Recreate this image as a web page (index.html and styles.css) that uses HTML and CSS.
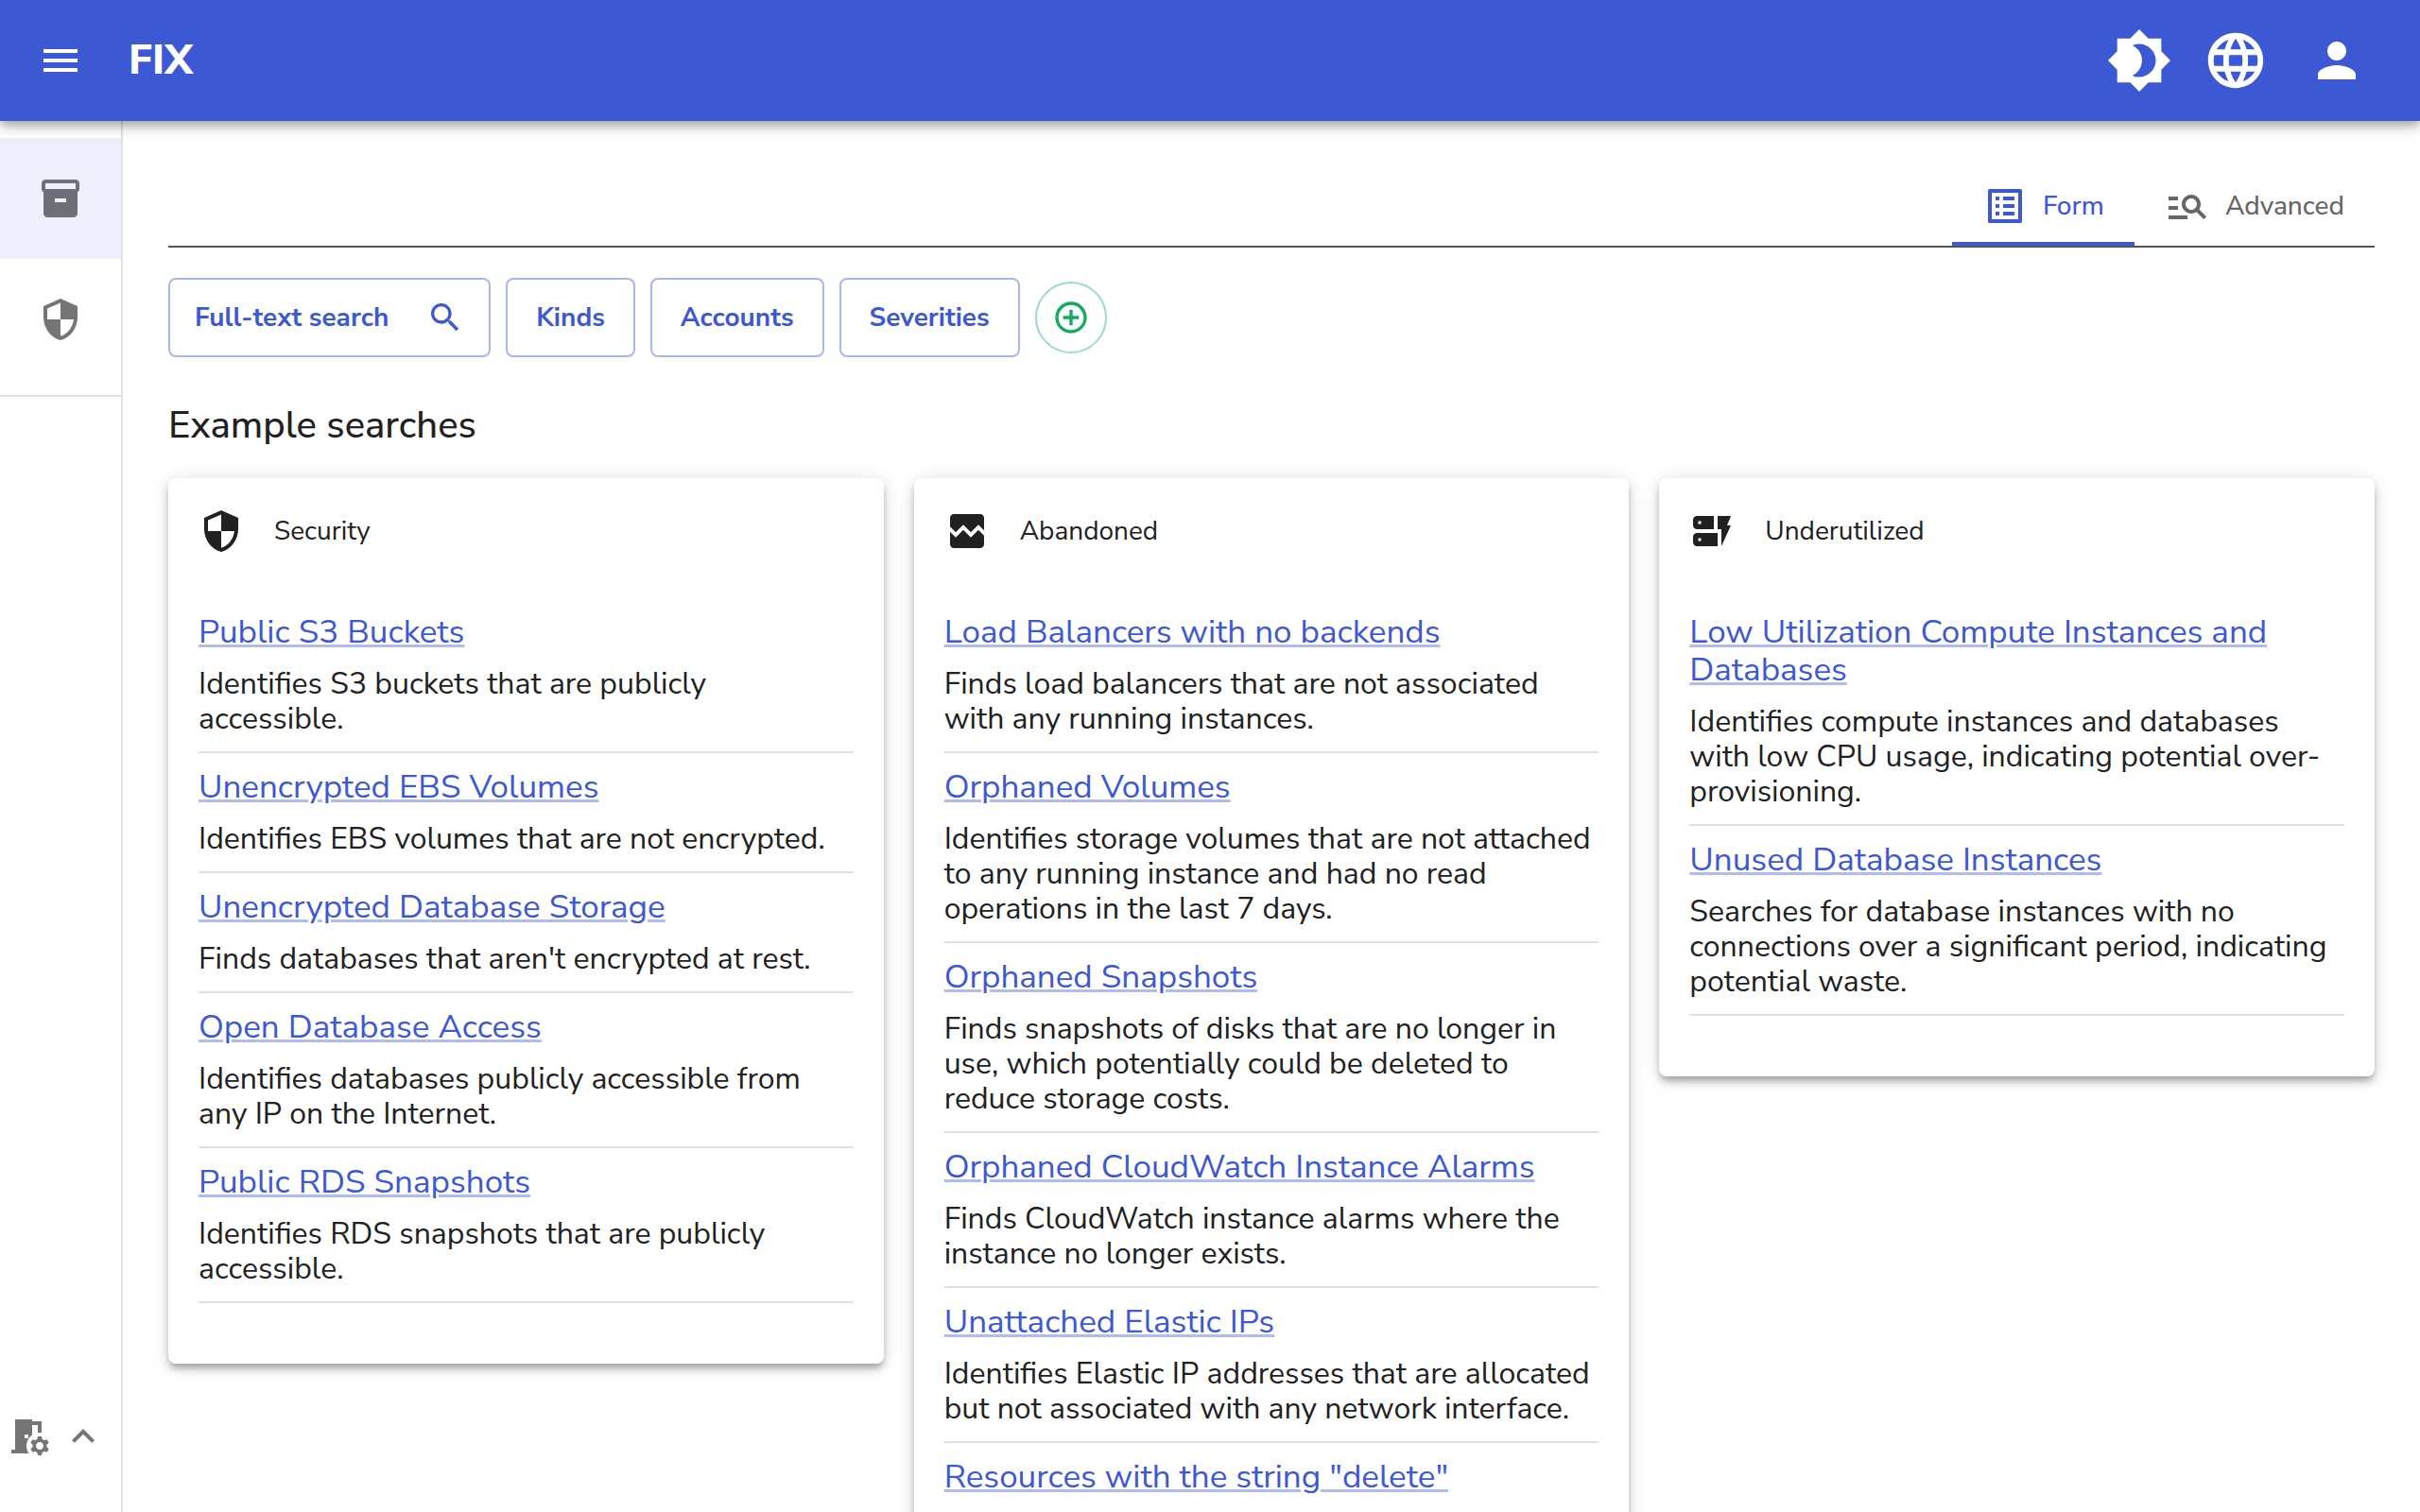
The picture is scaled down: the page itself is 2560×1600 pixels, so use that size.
FILE: index.html
```html
<!DOCTYPE html>
<html lang="en">
<head>
<meta charset="utf-8">
<meta name="viewport" content="width=device-width, initial-scale=1">
<title>FIX</title>
<link rel="stylesheet" href="styles.css">
</head>
<body>
<header class="appbar">
  <button class="icon-btn menu-btn" type="button" aria-label="Menu"><svg class="icon" viewBox="0 0 24 24"><path d="M3 18h18v-2H3v2zm0-5h18v-2H3v2zm0-7v2h18V6H3z"/></svg></button>
  <a class="brand" href="#">FIX</a>
  <div class="actions">
    <button class="icon-btn" type="button" aria-label="Theme"><svg class="icon icon-xl" viewBox="0 0 24 24"><path d="M20 8.69V4h-4.69L12 .69 8.69 4H4v4.69L.69 12 4 15.31V20h4.69L12 23.31 15.31 20H20v-4.69L23.31 12 20 8.69zM12 18c-.89 0-1.74-.2-2.5-.55C11.56 16.5 13 14.42 13 12s-1.44-4.5-3.5-5.45C10.26 6.2 11.11 6 12 6c3.31 0 6 2.69 6 6s-2.69 6-6 6z"/></svg></button>
    <button class="icon-btn" type="button" aria-label="Language"><svg class="icon icon-xl" viewBox="0 0 24 24"><path d="M11.99 2C6.47 2 2 6.48 2 12s4.47 10 9.99 10C17.52 22 22 17.52 22 12S17.52 2 11.99 2zm6.93 6h-2.95c-.32-1.25-.78-2.45-1.38-3.56 1.84.63 3.37 1.91 4.33 3.56zM12 4.04c.83 1.2 1.48 2.53 1.91 3.96h-3.82c.43-1.43 1.08-2.76 1.91-3.96zM4.26 14C4.1 13.36 4 12.69 4 12s.1-1.36.26-2h3.38c-.08.66-.14 1.32-.14 2 0 .68.06 1.34.14 2H4.26zm.82 2h2.95c.32 1.25.78 2.45 1.38 3.56-1.84-.63-3.37-1.9-4.33-3.56zm2.95-8H5.08c.96-1.66 2.49-2.93 4.33-3.56C8.81 5.55 8.35 6.75 8.03 8zM12 19.96c-.83-1.2-1.48-2.53-1.91-3.96h3.82c-.43 1.43-1.08 2.76-1.91 3.96zM14.34 14H9.66c-.09-.66-.16-1.32-.16-2 0-.68.07-1.35.16-2h4.68c.09.65.16 1.32.16 2 0 .68-.07 1.34-.16 2zm.25 5.56c.6-1.11 1.06-2.31 1.38-3.56h2.95c-.96 1.65-2.49 2.93-4.33 3.56zM16.36 14c.08-.66.14-1.32.14-2 0-.68-.06-1.34-.14-2h3.38c.16.64.26 1.31.26 2s-.1 1.36-.26 2h-3.38z"/></svg></button>
    <button class="icon-btn" type="button" aria-label="Account"><svg class="icon icon-lg" viewBox="0 0 24 24"><path d="M12 12c2.21 0 4-1.79 4-4s-1.79-4-4-4-4 1.79-4 4 1.79 4 4 4zm0 2c-2.67 0-8 1.34-8 4v2h16v-2c0-2.66-5.33-4-8-4z"/></svg></button>
  </div>
</header>
<div class="shell">
  <nav class="sidebar">
    <div class="nav-list">
      <a class="nav-item active" href="#" aria-label="Inventory"><svg class="icon" viewBox="0 0 24 24"><path d="M20 2H4c-1 0-2 .9-2 2v3.01c0 .72.43 1.34 1 1.69V20c0 1.1 1.1 2 2 2h14c.9 0 2-.9 2-2V8.7c.57-.35 1-.97 1-1.69V4c0-1.1-1-2-2-2zm-5 12H9v-2h6v2zm5-7H4V4l16-.02V7z"/></svg></a>
      <a class="nav-item" href="#" aria-label="Security"><svg class="icon" viewBox="0 0 24 24"><path d="M12 1 3 5v6c0 5.55 3.84 10.74 9 12 5.16-1.26 9-6.45 9-12V5l-9-4zm0 10.99h7c-.53 4.12-3.28 7.79-7 8.94V12H5V6.3l7-3.11v8.8z"/></svg></a>
    </div>
    <button class="workspace" type="button" aria-label="Workspace settings">
      <svg class="icon" viewBox="0 0 24 24"><path d="M14 11.26V6h3v4h2V4h-5V3H5v16H3v2h9.26C11.47 19.87 11 18.49 11 17c0-2.38 1.19-4.47 3-5.74zM10 11h2v2h-2v-2zm11.69 5.37 1.14-1-1-1.73-1.45.49c-.32-.27-.68-.48-1.08-.63L19 12h-2l-.3 1.49c-.4.15-.76.36-1.08.63l-1.45-.49-1 1.73 1.14 1c-.08.5-.08.76 0 1.26l-1.14 1 1 1.73 1.45-.49c.32.27.68.48 1.08.63L17 22h2l.3-1.49c.4-.15.76-.36 1.08-.63l1.45.49 1-1.73-1.14-1c.08-.51.08-.77 0-1.27zM18 19c-1.1 0-2-.9-2-2s.9-2 2-2 2 .9 2 2-.9 2-2 2z"/></svg>
      <svg class="icon" viewBox="0 0 24 24"><path d="m12 8-6 6 1.41 1.41L12 10.83l4.59 4.58L18 14z"/></svg>
    </button>
  </nav>
  <main class="content">
    <div class="tabs" role="tablist">
      <button class="tab selected" type="button" role="tab" aria-selected="true"><svg class="icon" viewBox="0 0 24 24"><path d="M19 5v14H5V5h14m1.1-2H3.9c-.5 0-.9.4-.9.9v16.2c0 .4.4.9.9.9h16.2c.4 0 .9-.5.9-.9V3.9c0-.5-.5-.9-.9-.9zM11 7h6v2h-6V7zm0 4h6v2h-6v-2zm0 4h6v2h-6zM7 7h2v2H7zm0 4h2v2H7zm0 4h2v2H7z"/></svg>Form</button>
      <button class="tab" type="button" role="tab" aria-selected="false"><svg class="icon" viewBox="0 0 24 24"><path d="M7 9H2V7h5v2zm0 3H2v2h5v-2zm13.59 7-3.83-3.83c-.8.52-1.74.83-2.76.83-2.76 0-5-2.24-5-5s2.24-5 5-5 5 2.24 5 5c0 1.02-.31 1.96-.83 2.75L22 17.59 20.59 19zM17 11c0-1.65-1.35-3-3-3s-3 1.35-3 3 1.35 3 3 3 3-1.35 3-3zM2 19h10v-2H2v2z"/></svg>Advanced</button>
    </div>
    <div class="filters">
      <button class="filter full-text" type="button">Full-text search<svg class="icon icon-sm" viewBox="0 0 24 24"><path d="M15.5 14h-.79l-.28-.27C15.41 12.59 16 11.11 16 9.5 16 5.91 13.09 3 9.5 3S3 5.91 3 9.5 5.91 16 9.5 16c1.61 0 3.09-.59 4.23-1.57l.27.28v.79l5 4.99L20.49 19l-4.99-5zm-6 0C7.01 14 5 11.99 5 9.5S7.01 5 9.5 5 14 7.01 14 9.5 11.99 14 9.5 14z"/></svg></button>
      <button class="filter" type="button">Kinds</button>
      <button class="filter" type="button">Accounts</button>
      <button class="filter" type="button">Severities</button>
      <button class="add-filter" type="button" aria-label="Add filter"><svg class="icon icon-sm" viewBox="0 0 24 24"><path d="M13 7h-2v4H7v2h4v4h2v-4h4v-2h-4V7zm-1-5C6.48 2 2 6.48 2 12s4.48 10 10 10 10-4.48 10-10S17.52 2 12 2zm0 18c-4.41 0-8-3.59-8-8s3.59-8 8-8 8 3.59 8 8-3.59 8-8 8z"/></svg></button>
    </div>
    <h1 class="title">Example searches</h1>
    <div class="cards">
      <section class="card">
        <h2 class="card-head"><svg class="icon" viewBox="0 0 24 24"><path d="M12 1 3 5v6c0 5.55 3.84 10.74 9 12 5.16-1.26 9-6.45 9-12V5l-9-4zm0 10.99h7c-.53 4.12-3.28 7.79-7 8.94V12H5V6.3l7-3.11v8.8z"/></svg>Security</h2>
        <ul class="searches">
          <li class="search"><a class="link" href="#">Public S3 Buckets</a><p class="desc">Identifies S3 buckets that are publicly accessible.</p></li>
          <li class="search"><a class="link" href="#">Unencrypted EBS Volumes</a><p class="desc">Identifies EBS volumes that are not encrypted.</p></li>
          <li class="search"><a class="link" href="#">Unencrypted Database Storage</a><p class="desc">Finds databases that aren't encrypted at rest.</p></li>
          <li class="search"><a class="link" href="#">Open Database Access</a><p class="desc">Identifies databases publicly accessible from any IP on the Internet.</p></li>
          <li class="search"><a class="link" href="#">Public RDS Snapshots</a><p class="desc">Identifies RDS snapshots that are publicly accessible.</p></li>
        </ul>
      </section>
      <section class="card">
        <h2 class="card-head"><svg class="icon" viewBox="0 0 24 24"><path d="M21 5v6.59l-3-3.01-4 4.01-4-4-4 4-3-3.01V5c0-1.1.9-2 2-2h14c1.1 0 2 .9 2 2zm-3 6.42 3 3.01V19c0 1.1-.9 2-2 2H5c-1.1 0-2-.9-2-2v-6.58l3 2.99 4-4 4 4 4-3.99z"/></svg>Abandoned</h2>
        <ul class="searches">
          <li class="search"><a class="link" href="#">Load Balancers with no backends</a><p class="desc">Finds load balancers that are not associated with any running instances.</p></li>
          <li class="search"><a class="link" href="#">Orphaned Volumes</a><p class="desc">Identifies storage volumes that are not attached to any running instance and had no read operations in the last 7 days.</p></li>
          <li class="search"><a class="link" href="#">Orphaned Snapshots</a><p class="desc">Finds snapshots of disks that are no longer in use, which potentially could be deleted to reduce storage costs.</p></li>
          <li class="search"><a class="link" href="#">Orphaned CloudWatch Instance Alarms</a><p class="desc">Finds CloudWatch instance alarms where the instance no longer exists.</p></li>
          <li class="search"><a class="link" href="#">Unattached Elastic IPs</a><p class="desc">Identifies Elastic IP addresses that are allocated but not associated with any network interface.</p></li>
          <li class="search"><a class="link" href="#">Resources with the string "delete"</a><p class="desc"></p></li>
        </ul>
      </section>
      <section class="card">
        <h2 class="card-head"><svg class="icon" viewBox="0 0 24 24"><path d="M17 20v-9h-2V4h7l-2 5h2l-5 11zm-2-7v7H4c-1.1 0-2-.9-2-2v-3c0-1.1.9-2 2-2h11zm-8.75 2.75h-1.5v1.5h1.5v-1.5zM13 4v7H4c-1.1 0-2-.9-2-2V6c0-1.1.9-2 2-2h9zM6.25 6.75h-1.5v1.5h1.5v-1.5z"/></svg>Underutilized</h2>
        <ul class="searches">
          <li class="search"><a class="link" href="#">Low Utilization Compute Instances and Databases</a><p class="desc">Identifies compute instances and databases with low CPU usage, indicating potential over-provisioning.</p></li>
          <li class="search"><a class="link" href="#">Unused Database Instances</a><p class="desc">Searches for database instances with no connections over a significant period, indicating potential waste.</p></li>
        </ul>
      </section>
    </div>
  </main>
</div>
</body>
</html>
```
FILE: styles.css
```css
* { box-sizing: border-box; }

body {
  margin: 0;
  height: 100vh;
  display: flex;
  flex-direction: column;
  overflow: hidden;
  background: #fff;
  color: #212121;
  font-family: "Nunito Sans", Nunito, "Open Sans", sans-serif;
}

button {
  font: inherit;
  color: inherit;
  background: none;
  border: 0;
  padding: 0;
  cursor: pointer;
}

.icon { width: 48px; height: 48px; fill: currentColor; flex: none; display: block; }
.icon-sm { width: 40px; height: 40px; }
.icon-lg { width: 60px; height: 60px; }
.icon-xl { width: 70px; height: 70px; }

.appbar {
  flex: none;
  height: 128px;
  display: flex;
  align-items: center;
  padding: 0 58px 0 40px;
  background: #3d58d3;
  color: #fff;
  position: relative;
  z-index: 2;
  box-shadow: 0 4px 8px -2px rgba(0,0,0,.2), 0 8px 10px rgba(0,0,0,.14), 0 2px 20px rgba(0,0,0,.12);
}
.brand { margin-left: 48px; color: inherit; text-decoration: none; font-size: 44px; font-weight: 800; }
.actions { margin-left: auto; display: flex; align-items: center; gap: 32px; }
.actions .icon-btn:last-child { margin-left: 10px; }

.shell { flex: 1; min-height: 0; display: flex; }
.sidebar {
  flex: none;
  width: 130px;
  border-right: 2px solid #e0e0e0;
  display: flex;
  flex-direction: column;
  justify-content: space-between;
  color: #757575;
}
.nav-list { padding: 18px 0 16px; border-bottom: 2px solid #e0e0e0; }
.nav-item { height: 128px; display: flex; align-items: center; justify-content: center; color: inherit; }
.nav-item.active { background: #edf0fc; color: #6e7078; }
.workspace { display: flex; gap: 10px; padding: 0 6px 56px; }

.content {
  flex: 1;
  min-width: 0;
  padding: 48px 48px 0;
  overflow-y: auto;
  scrollbar-width: none;
}

.tabs { display: flex; justify-content: flex-end; border-bottom: 2px solid #555; }
.tab {
  height: 84px;
  display: flex;
  align-items: center;
  gap: 16px;
  padding: 0 32px;
  font-size: 28px;
  font-weight: 500;
  color: #666;
}
.tab.selected { color: #3d58d3; box-shadow: inset 0 -4px #3d58d3; }

.filters { display: flex; align-items: center; gap: 16px; margin-top: 32px; }
.filter {
  height: 84px;
  display: flex;
  align-items: center;
  padding: 0 30px;
  border: 2px solid #aab6ee;
  border-radius: 8px;
  color: #3d58d3;
  font-size: 28px;
  font-weight: 700;
}
.full-text { padding: 0 26px; gap: 40px; }
.add-filter {
  width: 76px;
  height: 76px;
  display: flex;
  align-items: center;
  justify-content: center;
  border: 2px solid #9fdcbc;
  border-radius: 50%;
  color: #12aa61;
}

.title { margin: 44px 0 28px; font-size: 40px; line-height: 56px; font-weight: 500; }

.cards { display: grid; grid-template-columns: repeat(3, 1fr); gap: 32px; align-items: start; }
.card {
  border-radius: 8px;
  background: #fff;
  box-shadow: 0 6px 6px -2px rgba(0,0,0,.2), 0 6px 10px rgba(0,0,0,.14), 0 2px 20px rgba(0,0,0,.12);
}
.card-head { margin: 0; padding: 32px; display: flex; align-items: center; gap: 32px; font-size: 28px; line-height: 48px; font-weight: 400; }
.searches { list-style: none; margin: 0; padding: 15px 32px 64px; }
.search { padding: 16px 0; border-bottom: 2px solid #e0e0e0; }
.link {
  display: inline-block;
  color: #3d58d3;
  font-size: 35px;
  line-height: 40px;
  text-decoration-color: #b1bcee;
  text-decoration-thickness: 3px;
}
.desc { margin: 16px 0 0; min-height: 37px; font-size: 32px; line-height: 37px; }
```
